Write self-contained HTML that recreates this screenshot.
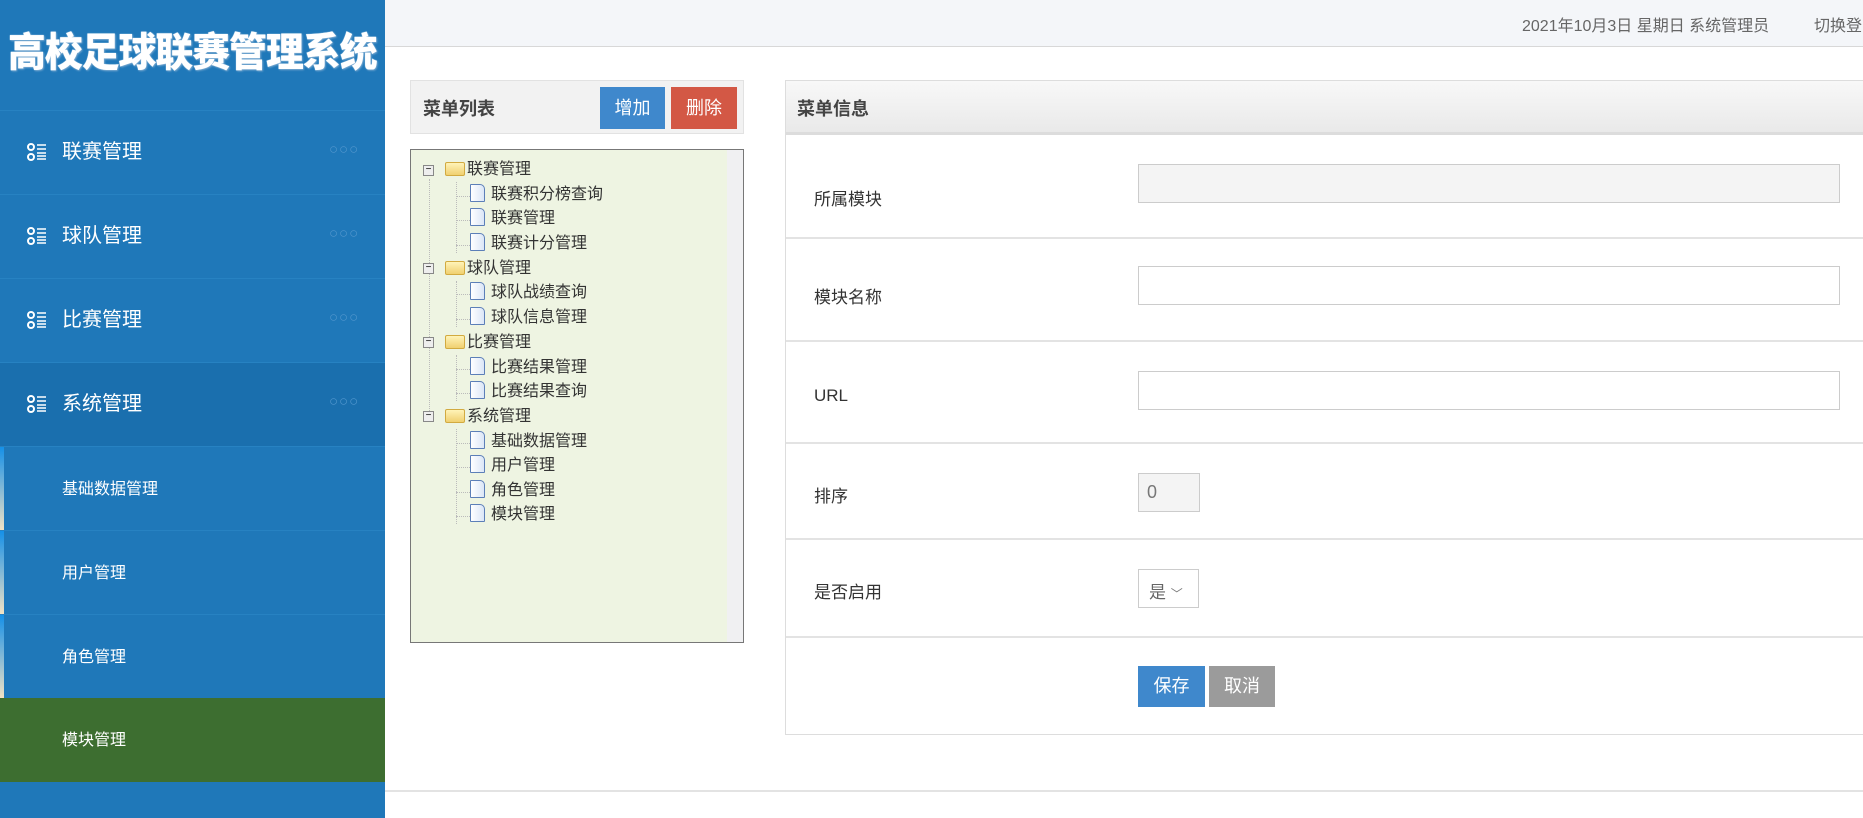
<!DOCTYPE html>
<html><head><meta charset="utf-8"><style>
*{margin:0;padding:0;box-sizing:border-box}
body{width:1863px;height:818px;overflow:hidden;background:#fff;font-family:"Liberation Sans","Noto Sans CJK SC",sans-serif;position:relative}
.side{position:absolute;left:0;top:0;width:385px;height:818px;background:#1f78b9}
.title{position:absolute;left:8px;top:20px;width:372px;color:#fff;font-size:40px;font-weight:900;letter-spacing:-1px;text-shadow:1px 1px 2px #7aa9d0,0 0 1px #fff;white-space:nowrap;transform:scaleX(.945);transform-origin:left}
.it{position:absolute;left:0;width:385px;height:84px;border-top:1px solid #2782c2;color:#fff}
.it .ic{position:absolute;left:27px;top:32px;width:20px;height:18px}
.it .t{position:absolute;left:62px;top:24px;font-size:20px}
.it .d{position:absolute;left:329px;top:30px;color:#4f95cc;font-size:15px;letter-spacing:1px}
.sub .t{font-size:16px;top:28px}
.sub .bar{position:absolute;left:0;top:0;width:4px;height:84px;background:linear-gradient(#1590e8,#f4e3c4)}
.top{position:absolute;left:385px;top:0;width:1478px;height:47px;background:#f4f6f9;border-bottom:1px solid #d8d8d8}
.top span{position:absolute;top:12px;font-size:16px;color:#666;white-space:nowrap}
.lh{position:absolute;left:410px;top:80px;width:334px;height:54px;background:#f2f2f2;border:1px solid #e2e2e2}
.lh b{position:absolute;left:12px;top:14px;font-size:18px;color:#444}
.btn{position:absolute;color:#fff;font-size:18px;text-align:center;line-height:42px;height:42px}
.tree{position:absolute;left:410px;top:149px;width:334px;height:494px;border:1px solid #777;background:#eef4e2}
.tree .sb{position:absolute;right:0;top:0;width:16px;height:100%;background:#f0f0f2}
.r{position:absolute;font-size:16px;color:#333;white-space:nowrap;height:24px;line-height:24px}
.fold{display:inline-block;width:20px;height:14px;background:linear-gradient(#fff3b8,#f0d070);border:1px solid #d2aa40;border-radius:2px;vertical-align:-2px;margin-right:2px}
.doc{display:inline-block;width:15px;height:18px;background:linear-gradient(90deg,#fff,#dbe6f7);border:1px solid #5c7fb8;border-radius:1px 5px 1px 1px;vertical-align:-3px;margin-right:6px}
.pm{position:absolute;width:11px;height:11px;border:1px solid #888;background:#eee;font-size:10px;line-height:8px;text-align:center}
.vl{position:absolute;border-left:1px dotted #bbb}
.hl{position:absolute;left:45px;width:14px;border-top:1px dotted #bbb}
.rp{position:absolute;left:785px;top:80px;width:1100px;height:655px;border:1px solid #ddd;border-right:none}
.rh{position:absolute;left:0;top:0;width:100%;height:54px;background:linear-gradient(#f8f8f8,#e9e9e9);border-bottom:3px solid #dcdcdc}
.rh b{position:absolute;left:11px;top:14px;font-size:18px;color:#444}
.row{position:absolute;left:0;width:100%;border-bottom:2px solid #e3e3e3}
.lab{position:absolute;left:28px;font-size:17px;color:#333}
.inp{position:absolute;left:352px;width:702px;height:39px;border:1px solid #ccc;background:#fff}
</style></head><body>
<div class="side">
<div class="title">高校足球联赛管理系统</div>
<div class="it" style="top:110px"><svg class="ic" viewBox="0 0 20 18"><circle cx="4" cy="4" r="3" fill="none" stroke="#fff" stroke-width="2"/><circle cx="4" cy="14" r="3" fill="none" stroke="#fff" stroke-width="2"/><path d="M10 2h9M10 6h9M10 10h9M10 13h9M10 16h9" stroke="#fff" stroke-width="1.6"/></svg><span class="t">联赛管理</span><span class="d">○○○</span></div>
<div class="it" style="top:194px"><svg class="ic" viewBox="0 0 20 18"><circle cx="4" cy="4" r="3" fill="none" stroke="#fff" stroke-width="2"/><circle cx="4" cy="14" r="3" fill="none" stroke="#fff" stroke-width="2"/><path d="M10 2h9M10 6h9M10 10h9M10 13h9M10 16h9" stroke="#fff" stroke-width="1.6"/></svg><span class="t">球队管理</span><span class="d">○○○</span></div>
<div class="it" style="top:278px"><svg class="ic" viewBox="0 0 20 18"><circle cx="4" cy="4" r="3" fill="none" stroke="#fff" stroke-width="2"/><circle cx="4" cy="14" r="3" fill="none" stroke="#fff" stroke-width="2"/><path d="M10 2h9M10 6h9M10 10h9M10 13h9M10 16h9" stroke="#fff" stroke-width="1.6"/></svg><span class="t">比赛管理</span><span class="d">○○○</span></div>
<div class="it" style="top:362px;background:#1a6fae"><svg class="ic" viewBox="0 0 20 18"><circle cx="4" cy="4" r="3" fill="none" stroke="#fff" stroke-width="2"/><circle cx="4" cy="14" r="3" fill="none" stroke="#fff" stroke-width="2"/><path d="M10 2h9M10 6h9M10 10h9M10 13h9M10 16h9" stroke="#fff" stroke-width="1.6"/></svg><span class="t">系统管理</span><span class="d">○○○</span></div>
<div class="it sub" style="top:446px"><div class="bar"></div><span class="t">基础数据管理</span></div>
<div class="it sub" style="top:530px"><div class="bar"></div><span class="t">用户管理</span></div>
<div class="it sub" style="top:614px"><div class="bar"></div><span class="t">角色管理</span></div>
<div class="it sub" style="top:698px;background:#3d6e30;border-top:none"><span class="t">模块管理</span></div>
</div>
<div class="top"><span style="left:1137px">2021年10月3日 星期日 系统管理员</span><span style="left:1429px">切换登录</span></div>

<div class="lh"><b>菜单列表</b><div class="btn" style="left:189px;top:6px;width:65px;background:#3f88cc">增加</div><div class="btn" style="left:260px;top:6px;width:66px;background:#d35845">删除</div></div>

<div class="tree"><div class="sb"></div>
<div class="vl" style="left:18px;top:29px;height:238px"></div>
<div class="vl" style="left:45px;top:32px;height:71px"></div>
<div class="vl" style="left:45px;top:131px;height:46px"></div>
<div class="vl" style="left:45px;top:205px;height:46px"></div>
<div class="vl" style="left:45px;top:279px;height:95px"></div>
<div class="hl" style="top:46px"></div><div class="hl" style="top:70px"></div><div class="hl" style="top:95px"></div>
<div class="hl" style="top:144px"></div><div class="hl" style="top:169px"></div>
<div class="hl" style="top:219px"></div><div class="hl" style="top:243px"></div>
<div class="hl" style="top:293px"></div><div class="hl" style="top:317px"></div><div class="hl" style="top:342px"></div><div class="hl" style="top:366px"></div>
</div>
<div class="pm" style="left:423px;top:165px">−</div>
<div class="pm" style="left:423px;top:263px">−</div>
<div class="pm" style="left:423px;top:337px">−</div>
<div class="pm" style="left:423px;top:411px">−</div>
<div class="r" style="left:445px;top:158px"><span class="fold"></span>联赛管理</div>
<div class="r" style="left:470px;top:183px"><span class="doc"></span>联赛积分榜查询</div>
<div class="r" style="left:470px;top:207px"><span class="doc"></span>联赛管理</div>
<div class="r" style="left:470px;top:232px"><span class="doc"></span>联赛计分管理</div>
<div class="r" style="left:445px;top:257px"><span class="fold"></span>球队管理</div>
<div class="r" style="left:470px;top:281px"><span class="doc"></span>球队战绩查询</div>
<div class="r" style="left:470px;top:306px"><span class="doc"></span>球队信息管理</div>
<div class="r" style="left:445px;top:331px"><span class="fold"></span>比赛管理</div>
<div class="r" style="left:470px;top:356px"><span class="doc"></span>比赛结果管理</div>
<div class="r" style="left:470px;top:380px"><span class="doc"></span>比赛结果查询</div>
<div class="r" style="left:445px;top:405px"><span class="fold"></span>系统管理</div>
<div class="r" style="left:470px;top:430px"><span class="doc"></span>基础数据管理</div>
<div class="r" style="left:470px;top:454px"><span class="doc"></span>用户管理</div>
<div class="r" style="left:470px;top:479px"><span class="doc"></span>角色管理</div>
<div class="r" style="left:470px;top:503px"><span class="doc"></span>模块管理</div>

<div class="rp">
<div class="rh"><b>菜单信息</b></div>
<div class="row" style="top:54px;height:104px"><span class="lab" style="top:50px">所属模块</span><div class="inp" style="top:29px;background:#f4f4f4"></div></div>
<div class="row" style="top:158px;height:103px"><span class="lab" style="top:44px">模块名称</span><div class="inp" style="top:27px"></div></div>
<div class="row" style="top:261px;height:102px"><span class="lab" style="top:44px">URL</span><div class="inp" style="top:29px"></div></div>
<div class="row" style="top:363px;height:96px"><span class="lab" style="top:38px">排序</span><div class="inp" style="top:29px;width:62px;background:#f4f4f4;color:#777;font-size:18px;padding:8px 0 0 8px">0</div></div>
<div class="row" style="top:459px;height:98px"><span class="lab" style="top:38px">是否启用</span><div class="inp" style="top:29px;width:61px;color:#666;font-size:17px;padding:8px 0 0 10px">是 <span style="font-size:12px;color:#777">﹀</span></div></div>
<div class="btn" style="left:352px;top:585px;width:67px;height:41px;line-height:41px;background:#3f88cc">保存</div>
<div class="btn" style="left:423px;top:585px;width:66px;height:41px;line-height:41px;background:#9b9b9b">取消</div>
</div>
<div style="position:absolute;left:385px;top:790px;width:1478px;border-top:2px solid #e3e3e3"></div>
</body></html>
